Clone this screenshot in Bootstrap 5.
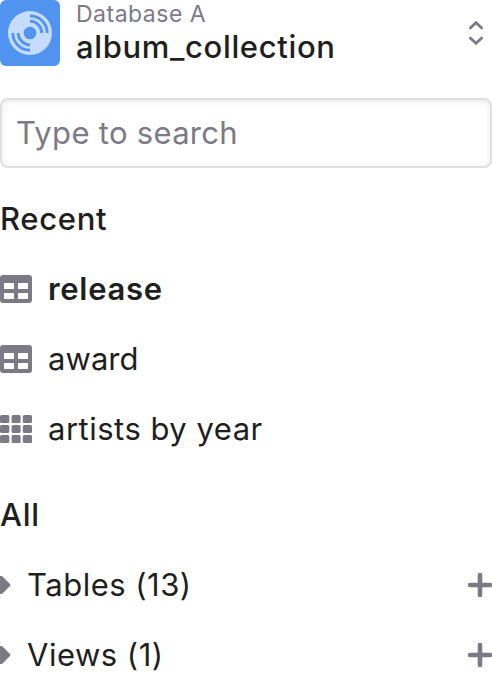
<!DOCTYPE html>
<html lang="en">
<head>
<meta charset="utf-8">
<meta name="viewport" content="width=device-width, initial-scale=1">
<title>album_collection</title>
<link href="https://cdn.jsdelivr.net/npm/bootstrap@5.3.0/dist/css/bootstrap.min.css" rel="stylesheet">
<style>
body { font-family: Inter, "Liberation Sans", sans-serif; font-size: 31px; color: #1f1f21; background: #fff; overflow: hidden; }
svg { display: block; flex: none; }
.glyph { color: #7c7a85; fill: currentColor; }
.db-head { height: 66px; }
.db-label { font-size: 23px; line-height: 28px; color: #7c7a85; letter-spacing: .5px; }
.db-name { line-height: 38px; letter-spacing: .65px; }
.search { margin-top: 32px; height: 70px; padding: 0 14px 2px; font-size: 31px; letter-spacing: .3px; border: 2px solid #e0e0e0; border-radius: 8px; box-shadow: inset 0 2px 6px rgba(0,0,0,.08); }
.search::placeholder { color: #7c7a85; opacity: 1; }
.line { height: 70px; line-height: 70px; letter-spacing: .5px; white-space: nowrap; }
.medium { font-weight: 500; }
.line.medium, .line.fw-semibold { letter-spacing: .7px; }
.toggle { margin-right: -1px; }
.tight { letter-spacing: .05px; }
</style>
</head>
<body>
<header class="db-head d-flex align-items-center">
  <svg width="60" height="66" viewBox="0 0 60 66">
    <rect width="60" height="66" rx="6" fill="#5094f0"/>
    <circle cx="30" cy="33" r="22" fill="#c5dcfd"/>
    <circle cx="30" cy="33" r="6.300" fill="#5094f0"/>
    <g fill="none" stroke="#5094f0" stroke-width="2.800">
      <path d="M30 21.200A11.800 11.800 0 0 1 41.800 33M30 15.800A17.200 17.200 0 0 1 47.200 33"/>
      <path d="M30 44.800A11.800 11.800 0 0 1 18.200 33M30 50.200A17.200 17.200 0 0 1 12.800 33"/>
    </g>
  </svg>
  <div class="ms-3 flex-grow-1 align-self-start">
    <div class="db-label">Database A</div>
    <div class="db-name medium">album_collection</div>
  </div>
  <svg class="glyph" width="24" height="32" viewBox="0 0 24 32"><path d="M1.500 11.700 8 5.700l6.500 6M1.500 20.300 8 26.300l6.500-6" fill="none" stroke="currentColor" stroke-width="2.700"/></svg>
</header>
<input class="search form-control" type="text" placeholder="Type to search" aria-label="Type to search">
<section class="mt-3">
  <div class="line medium">Recent</div>
  <div class="line d-flex align-items-center gap-3 fw-semibold">
    <svg class="glyph" width="32" height="28" viewBox="0 0 32 28"><path fill-rule="evenodd" d="M3 0h26a3 3 0 0 1 3 3v22a3 3 0 0 1-3 3H3a3 3 0 0 1-3-3V3a3 3 0 0 1 3-3ZM4 8v6h10V8ZM18 8v6h10V8ZM4 18v6h10v-6ZM18 18v6h10v-6Z"/></svg>
    <span>release</span>
  </div>
  <div class="line d-flex align-items-center gap-3">
    <svg class="glyph" width="32" height="28" viewBox="0 0 32 28"><path fill-rule="evenodd" d="M3 0h26a3 3 0 0 1 3 3v22a3 3 0 0 1-3 3H3a3 3 0 0 1-3-3V3a3 3 0 0 1 3-3ZM4 8v6h10V8ZM18 8v6h10V8ZM4 18v6h10v-6ZM18 18v6h10v-6Z"/></svg>
    <span class="tight">award</span>
  </div>
  <div class="line d-flex align-items-center gap-3">
    <svg class="glyph" width="32" height="28" viewBox="0 0 32 28">
      <rect width="9.300" height="8" rx="1.500"/><rect x="11.600" width="9" height="8" rx="1.500"/><rect x="22.800" width="9.200" height="8" rx="1.500"/>
      <rect y="10" width="9.300" height="8" rx="1.500"/><rect x="11.600" y="10" width="9" height="8" rx="1.500"/><rect x="22.800" y="10" width="9.200" height="8" rx="1.500"/>
      <rect y="20" width="9.300" height="8" rx="1.500"/><rect x="11.600" y="20" width="9" height="8" rx="1.500"/><rect x="22.800" y="20" width="9.200" height="8" rx="1.500"/>
    </svg>
    <span>artists by year</span>
  </div>
</section>
<section class="mt-3">
  <div class="line medium">All</div>
  <div class="line d-flex align-items-center">
    <svg class="glyph toggle" width="28" height="20" viewBox="0 0 28 20"><path d="M0 1h1.200q.9 0 1.600.7l7.200 7.300q1 1 0 2l-7.200 7.300q-.7.700-1.600.7H0Z"/></svg>
    <span class="flex-grow-1">Tables (13)</span>
    <svg class="glyph" width="24" height="24" viewBox="0 0 24 24"><path d="M12 2v20M2 12h20" stroke="currentColor" stroke-width="4.600" stroke-linecap="round"/></svg>
  </div>
  <div class="line d-flex align-items-center">
    <svg class="glyph toggle" width="28" height="20" viewBox="0 0 28 20"><path d="M0 1h1.200q.9 0 1.600.7l7.200 7.300q1 1 0 2l-7.200 7.300q-.7.700-1.600.7H0Z"/></svg>
    <span class="flex-grow-1">Views (1)</span>
    <svg class="glyph" width="24" height="24" viewBox="0 0 24 24"><path d="M12 2v20M2 12h20" stroke="currentColor" stroke-width="4.600" stroke-linecap="round"/></svg>
  </div>
</section>
<script src="https://cdn.jsdelivr.net/npm/bootstrap@5.3.0/dist/js/bootstrap.bundle.min.js"></script>
</body>
</html>
